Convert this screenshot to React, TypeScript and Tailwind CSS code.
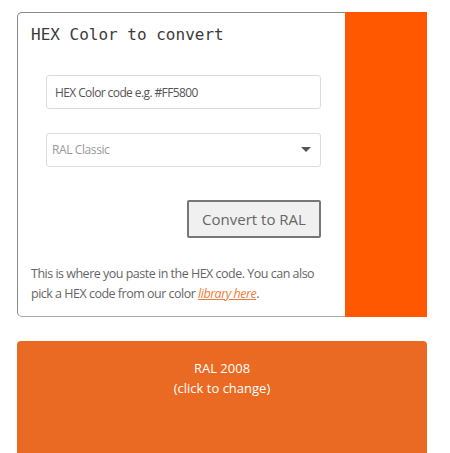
export default function App() {
  return (
    <div className="min-h-[453px] bg-white pt-[12px] pl-[17px] font-['Open_Sans',sans-serif]">
      {/* Converter card */}
      <div className="flex w-[410px] h-[305px]">
        <div className="w-[328px] border border-r-0 border-[#8a8a8a] border-b-[#a8a8a8] rounded-l-[5px] pl-[13px] pr-[14px] pt-[10px]">
          <h2 className="font-['DejaVu_Sans_Mono',monospace] text-[16px] leading-[24px] text-[#3a3a3a]">
            HEX Color to convert
          </h2>
          <div className="pl-[15px] mt-[28px]">
            <input
              className="w-[275px] h-[34px] border border-[#dcdcdc] rounded-[3px] px-[8px] text-[12px] tracking-[-0.6px] text-[#555] placeholder:text-[#555] outline-none"
              placeholder="HEX Color code e.g. #FF5800"
            />
            <div className="mt-[24px] w-[275px] h-[34px] border border-[#dcdcdc] rounded-[3px] pl-[5px] pr-[8px] flex items-center justify-between text-[12px] tracking-[-0.4px] text-[#999]">
              <span>RAL Classic</span>
              <svg width="10" height="6" viewBox="0 0 10 6" className="mr-[1px]">
                <path d="M0 0 H10 L5 5 Z" fill="#555" />
              </svg>
            </div>
            <div className="flex justify-end w-[275px] mt-[33px]">
              <button className="w-[134px] h-[38px] border-2 border-[#777] rounded-[2px] bg-[#f0f0f0] text-[15px] text-[#666]">
                Convert to RAL
              </button>
            </div>
          </div>
          <p className="mt-[26px] text-[12.5px] tracking-[-0.5px] leading-[20px] text-[#666]">
            This is where you paste in the HEX code. You can also pick a HEX code from our color{" "}
            <a className="italic underline text-[#f07c3c]">library here</a>.
          </p>
        </div>
        <div className="w-[82px] bg-[#ff5800]" />
      </div>

      {/* Result swatch */}
      <div className="mt-[24px] w-[410px] h-[120px] bg-[#eb6a23] rounded-t-[4px] pt-[17px] text-center text-white text-[13px] leading-[20px]">
        <div>RAL 2008</div>
        <div>(click to change)</div>
      </div>
    </div>
  )
}
